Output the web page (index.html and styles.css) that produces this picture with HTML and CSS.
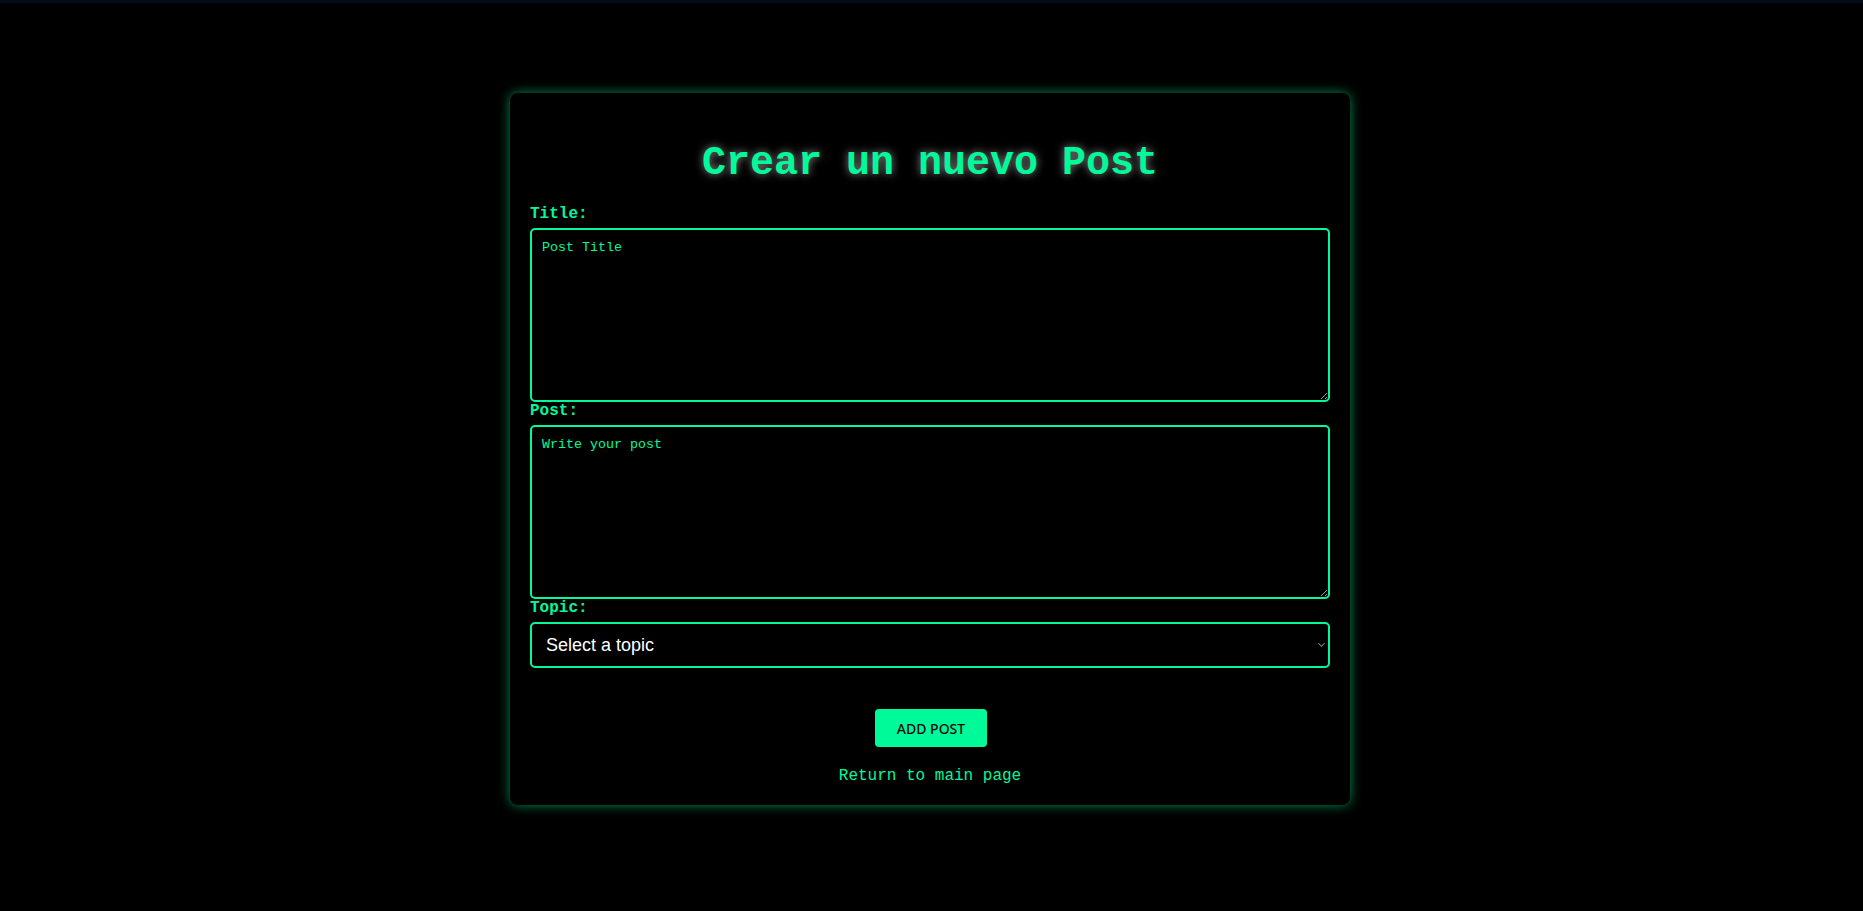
FILE: index.html
```html
<!DOCTYPE html>
<html lang="es">
<head>
<meta charset="utf-8">
<title>Crear un nuevo Post</title>
<link rel="stylesheet" href="styles.css">
</head>
<body>
<div class="topbar"></div>
<main class="page">
  <section class="card">
    <h1 class="card-title">Crear un nuevo Post</h1>
    <form class="post-form">
      <label class="field-label" for="title">Title:</label>
      <textarea id="title" class="field-area" placeholder="Post Title"></textarea>
      <label class="field-label" for="post">Post:</label>
      <textarea id="post" class="field-area" placeholder="Write your post"></textarea>
      <label class="field-label" for="topic">Topic:</label>
      <div class="select-wrap">
        <select id="topic" class="field-select">
          <option>Select a topic</option>
        </select>
      </div>
      <div class="actions">
        <button type="button" class="add-btn">ADD POST</button>
      </div>
    </form>
    <a class="back-link" href="#">Return to main page</a>
  </section>
</main>
</body>
</html>
```

FILE: styles.css
```css
html, body {
  margin: 0;
  padding: 0;
  background: #000;
  height: 100%;
}

body {
  font-family: "Liberation Mono", "Courier New", monospace;
  color: #00fa9a;
}

.topbar {
  height: 3px;
  background: #060b1c;
}

.page {
  display: flex;
  justify-content: center;
  padding-top: 90px;
}

.card {
  box-sizing: border-box;
  width: 840px;
  margin-right: 3px;
  padding: 20px;
  background: #000;
  border-radius: 8px;
  box-shadow: 0 0 12px rgba(0, 250, 154, 0.55);
  display: flex;
  flex-direction: column;
}

.card-title {
  margin: 28px 0 19px;
  text-align: center;
  font-family: "Liberation Mono", "Courier New", monospace;
  font-weight: bold;
  font-size: 40px;
  color: #00fa9a;
  text-shadow: 0 0 8px rgba(255, 255, 255, 0.55);
}

.post-form {
  display: flex;
  flex-direction: column;
}

.field-label {
  font-family: "Liberation Mono", "Courier New", monospace;
  font-weight: bold;
  font-size: 16px;
  line-height: 18px;
  color: #00fa9a;
  margin-bottom: 5px;
}

.field-area {
  box-sizing: border-box;
  width: 800px;
  height: 174px;
  padding: 10px;
  background: #000;
  color: #00fa9a;
  border: 2px solid #00fa9a;
  border-radius: 5px;
  font-family: "Liberation Mono", monospace;
  font-size: 13.33px;
  outline: none;
}

.field-area::placeholder {
  color: #00fa9a;
  opacity: 1;
}

.select-wrap {
  position: relative;
  width: 800px;
}

.select-wrap::after {
  content: "";
  position: absolute;
  right: 6px;
  top: 19px;
  width: 4px;
  height: 4px;
  border-right: 1.5px solid #7a7a7a;
  border-bottom: 1.5px solid #7a7a7a;
  transform: rotate(45deg);
  pointer-events: none;
}

.field-select {
  box-sizing: border-box;
  width: 800px;
  height: 46px;
  padding: 0 14px;
  background: #000;
  color: #fff;
  border: 2px solid #00fa9a;
  border-radius: 5px;
  font-family: "Liberation Sans", Arial, sans-serif;
  font-size: 18px;
  outline: none;
  appearance: none;
  -webkit-appearance: none;
}

.actions {
  display: flex;
  justify-content: center;
  padding-top: 41px;
}

.add-btn {
  width: 112px;
  height: 38px;
  margin-left: 2px;
  background: #00fa9a;
  color: #0a0a0a;
  border: none;
  border-radius: 4px;
  font-family: "Noto Sans", sans-serif;
  font-size: 14px;
  font-weight: 500;
  cursor: pointer;
}

.back-link {
  align-self: center;
  margin-top: 20px;
  font-family: "Liberation Mono", "Courier New", monospace;
  font-size: 16px;
  line-height: 18px;
  color: #00fa9a;
  text-decoration: none;
}
```
